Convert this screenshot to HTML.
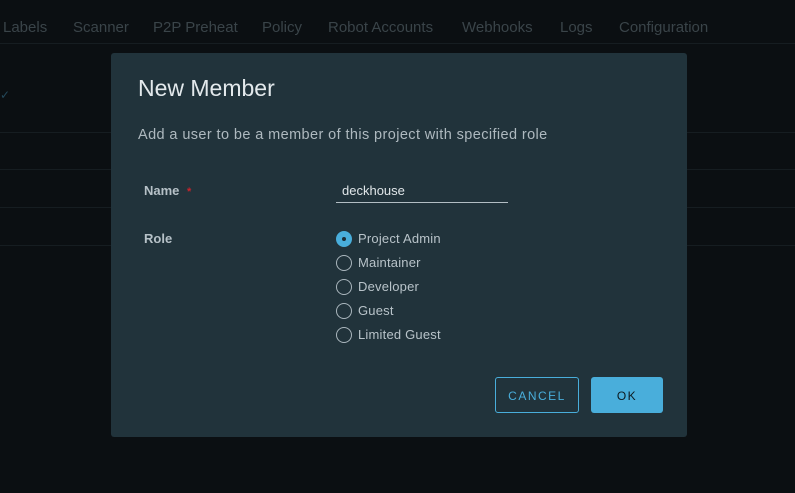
<!DOCTYPE html>
<html><head><style>
*{margin:0;padding:0;box-sizing:border-box}
body{width:795px;height:493px;background:#0b0f12;font-family:"Liberation Sans",sans-serif;position:relative;overflow:hidden}
.tab{position:absolute;top:19px;font-size:15px;color:#3a4449}
.hl{position:absolute;left:0;width:795px;height:1px;background:#161d21}
.dlg{position:absolute;left:111px;top:53px;width:576px;height:384px;background:#21333b;border-radius:3px}
.t{position:absolute;color:#d9e1e5}
.lbl{position:absolute;font-size:13px;font-weight:bold;color:#b6c1c7}
.r{position:absolute;left:225px;width:16px;height:16px;border:1.5px solid #aab6bd;border-radius:50%}
.rt{position:absolute;left:247px;font-size:13px;color:#b8c3c9;letter-spacing:0.2px}
</style></head><body>
<div class="tab" style="left:3px">Labels</div>
<div class="tab" style="left:73px">Scanner</div>
<div class="tab" style="left:153px">P2P Preheat</div>
<div class="tab" style="left:262px">Policy</div>
<div class="tab" style="left:328px">Robot Accounts</div>
<div class="tab" style="left:462px">Webhooks</div>
<div class="tab" style="left:560px">Logs</div>
<div class="tab" style="left:619px">Configuration</div>
<div class="hl" style="top:43px"></div>
<div class="hl" style="top:132px"></div>
<div class="hl" style="top:169px"></div>
<div class="hl" style="top:207px"></div>
<div class="hl" style="top:245px"></div>
<div style="position:absolute;left:0;top:88px;color:#24485a;font-size:12px">✓</div>
<div class="dlg">
<div class="t" style="left:27px;top:22px;font-size:23px;color:#e3e9ec">New Member</div>
<div class="t" style="left:27px;top:74px;font-size:14.5px;color:#aeb9bf;letter-spacing:0.4px">Add a user to be a member of this project with specified role</div>
<div class="lbl" style="left:33px;top:130px">Name <span style="color:#c8242c;font-size:11px;margin-left:4px">*</span></div>
<div class="t" style="left:231px;top:130px;font-size:13px;color:#e0e6e9">deckhouse</div>
<div style="position:absolute;left:225px;top:149px;width:172px;height:1px;background:#b3bec4"></div>
<div class="lbl" style="left:33px;top:178px">Role</div>
<div class="r" style="top:178px;background:#49aedb;border-color:#49aedb"><div style="position:absolute;left:4.5px;top:4.5px;width:4px;height:4px;border-radius:50%;background:#1d2d35"></div></div>
<div class="rt" style="top:178px">Project Admin</div>
<div class="r" style="top:202px"></div><div class="rt" style="top:202px">Maintainer</div>
<div class="r" style="top:226px"></div><div class="rt" style="top:226px">Developer</div>
<div class="r" style="top:250px"></div><div class="rt" style="top:250px">Guest</div>
<div class="r" style="top:274px"></div><div class="rt" style="top:274px">Limited Guest</div>
<div style="position:absolute;left:384px;top:324px;width:84px;height:36px;border:1px solid #49aedb;border-radius:3px;color:#49aedb;font-size:12px;letter-spacing:1.5px;text-align:center;line-height:36px">CANCEL</div>
<div style="position:absolute;left:480px;top:324px;width:72px;height:36px;background:#49aedb;border-radius:3px;color:#0d1a20;font-size:12px;letter-spacing:1.5px;text-align:center;line-height:38px">OK</div>
</div>
</body></html>
